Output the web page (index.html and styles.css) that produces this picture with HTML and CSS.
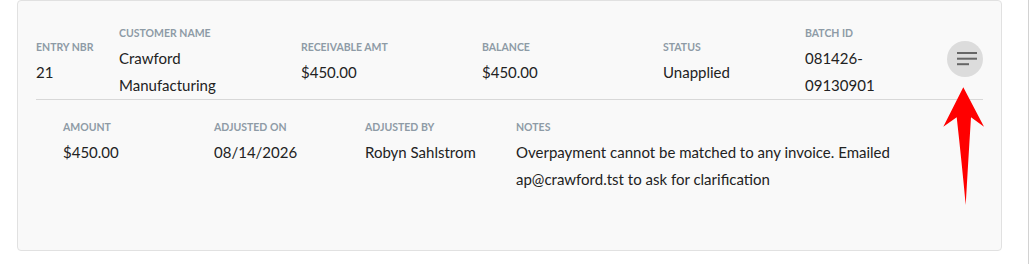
FILE: index.html
```html
<!DOCTYPE html>
<html>
<head>
<meta charset="utf-8">
<link rel="stylesheet" href="styles.css">
</head>
<body>
<div class="page">
  <div class="card">
    <div class="summary">
      <div class="field">
        <div class="label">Entry Nbr</div>
        <div class="value">21</div>
      </div>
      <div class="field">
        <div class="label">Customer Name</div>
        <div class="value">Crawford Manufacturing</div>
      </div>
      <div class="field">
        <div class="label">Receivable Amt</div>
        <div class="value">$450.00</div>
      </div>
      <div class="field">
        <div class="label">Balance</div>
        <div class="value">$450.00</div>
      </div>
      <div class="field">
        <div class="label">Status</div>
        <div class="value">Unapplied</div>
      </div>
      <div class="field">
        <div class="label">Batch ID</div>
        <div class="value">081426-09130901</div>
      </div>
      <button class="menu-btn" type="button" aria-label="Details">
        <svg width="36" height="36" viewBox="0 0 36 36">
          <rect x="10" y="11" width="20" height="2" fill="#666"/>
          <rect x="10" y="16.7" width="20" height="2" fill="#666"/>
          <rect x="10" y="22.2" width="12" height="2" fill="#666"/>
        </svg>
      </button>
    </div>
    <div class="details">
      <div class="field">
        <div class="label">Amount</div>
        <div class="value">$450.00</div>
      </div>
      <div class="field">
        <div class="label">Adjusted On</div>
        <div class="value">08/14/2026</div>
      </div>
      <div class="field">
        <div class="label">Adjusted By</div>
        <div class="value">Robyn Sahlstrom</div>
      </div>
      <div class="field notes">
        <div class="label">Notes</div>
        <div class="value">Overpayment cannot be matched to any invoice. Emailed ap@crawford.tst to ask for clarification</div>
      </div>
    </div>
  </div>
  <svg class="arrow" width="48" height="124" viewBox="0 0 48 124">
    <path d="M23.3 2.3 L44 41.7 L31 32.3 Q28 80 25.7 120 Q22 80 16.7 32.3 L3.3 41.7 Z" fill="#ff0000"/>
  </svg>
</div>
</body>
</html>
```

FILE: styles.css
```css
* {
  box-sizing: border-box;
}

html, body {
  margin: 0;
  padding: 0;
  background: #ffffff;
}

body {
  font-family: Lato, "Noto Sans", sans-serif;
  color: #222222;
}

.page {
  position: relative;
  width: 1029px;
  height: 264px;
  padding: 0 26px 0 17px;
  border-right: 1px solid #d2d2d2;
}

.card {
  height: 251px;
  background: #f9f9f9;
  border: 1px solid #e1e1e1;
  border-radius: 4px;
  padding: 0 18px;
}

.summary {
  display: grid;
  grid-template-columns: 83px 182px 181px 181px 142px 100px 1fr;
  align-items: center;
  padding-top: 25px;
  border-bottom: 1px solid #d8d8d8;
}

.field {
  padding-right: 24px;
}

.label {
  font-size: 10.5px;
  line-height: 15px;
  font-weight: 700;
  text-transform: uppercase;
  color: #8e9ba6;
  margin-bottom: 4px;
  white-space: nowrap;
}

.value {
  font-size: 15px;
  line-height: 27px;
  color: #222222;
}

.menu-btn {
  justify-self: end;
  align-self: start;
  margin-top: 15px;
  width: 36px;
  height: 36px;
  padding: 0;
  border: none;
  border-radius: 50%;
  background: #dcdcdc;
  display: flex;
  align-items: center;
  justify-content: center;
}

.menu-btn svg {
  display: block;
}

.details {
  display: grid;
  grid-template-columns: 151px 151px 151px 1fr;
  padding: 20px 60px 0 27px;
}

.arrow {
  position: absolute;
  left: 940px;
  top: 85px;
}
```
